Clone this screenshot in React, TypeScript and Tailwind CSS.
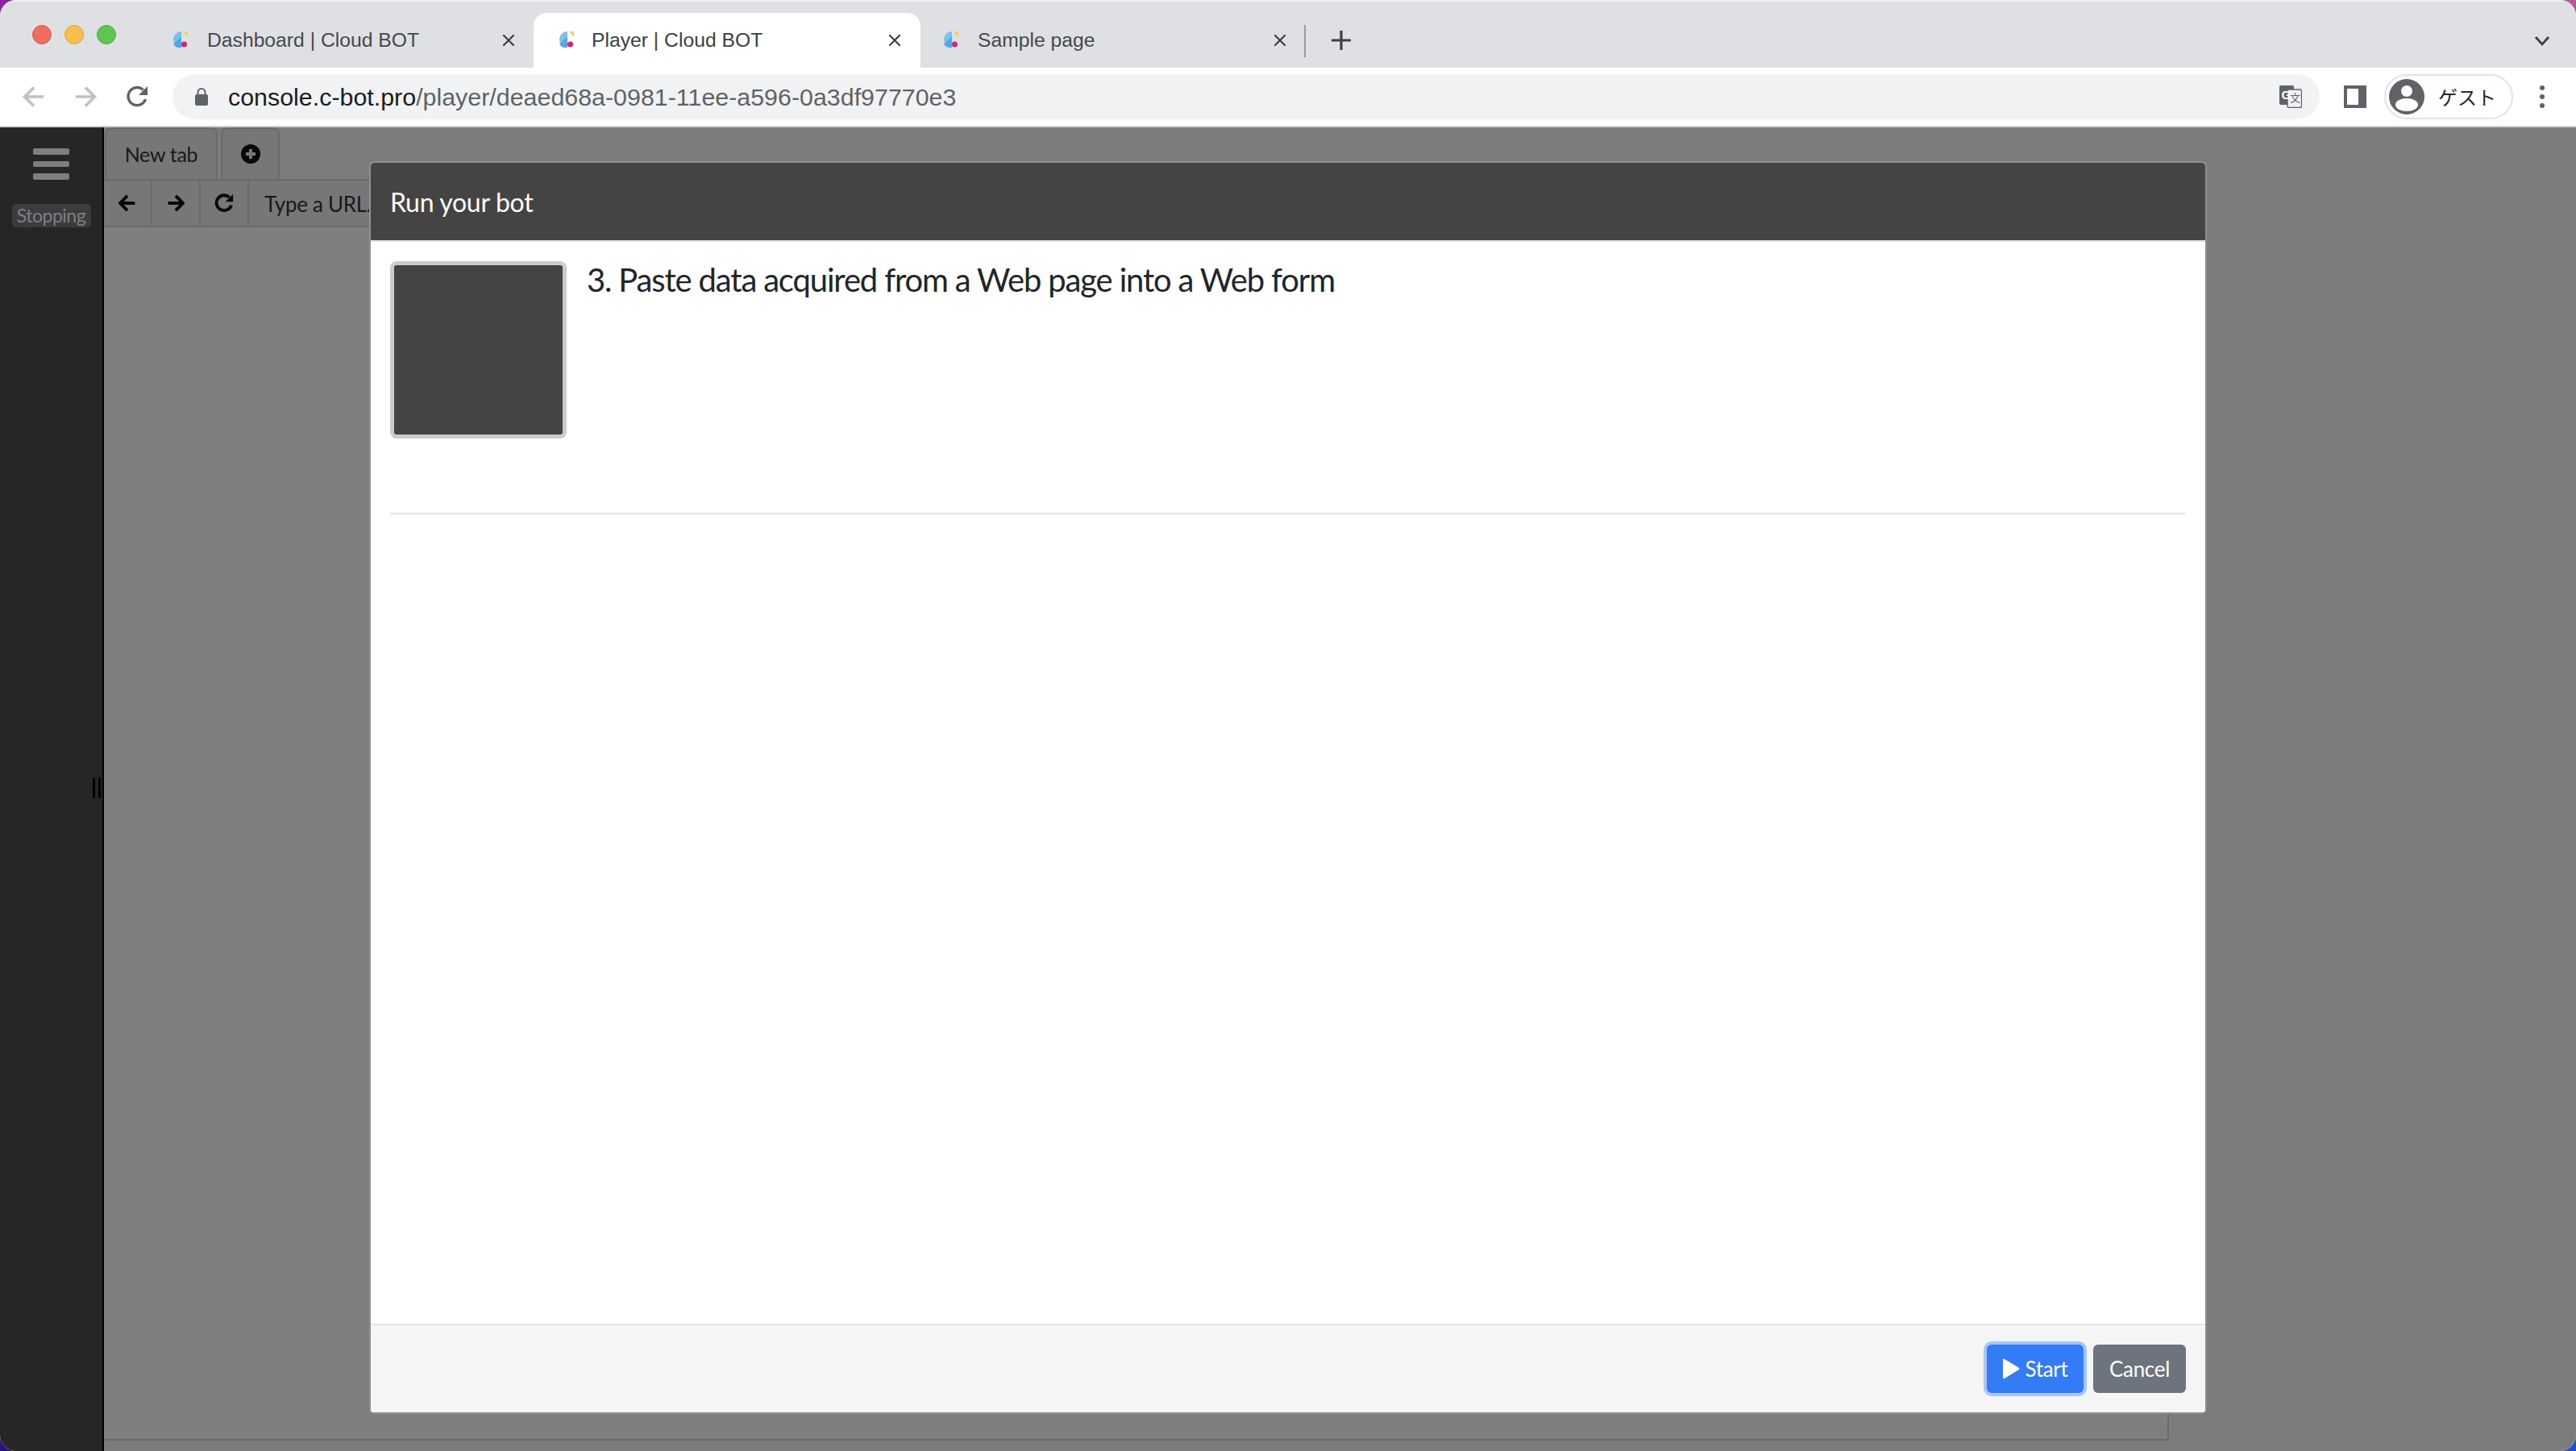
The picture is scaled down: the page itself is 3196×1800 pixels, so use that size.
import React from "react";

function Favicon() {
  return (
    <svg width="24" height="24" viewBox="0 0 24 24" className="shrink-0">
      <path d="M15 2 A10 10 0 1 0 15 22 Z" fill="#7cc0ec" />
      <path d="M15 8 L15 22 A10 10 0 0 1 5 18 Z" fill="#4fa9e4" />
      <path d="M16 2 H23 V9.5 Q20 4 16 2 Z" fill="#f4cf63" />
      <circle cx="18.5" cy="18" r="3.6" fill="#d8256f" />
    </svg>
  );
}

function CloseX() {
  return (
    <svg width="16" height="16" viewBox="0 0 16 16" className="shrink-0">
      <path d="M2 2 L14 14 M14 2 L2 14" stroke="#3c3f44" strokeWidth="2.2" strokeLinecap="round" />
    </svg>
  );
}

function BrowserTab({ title, active, width, pl, textGap }: { title: string; active?: boolean; width: string; pl: string; textGap: string }) {
  return (
    <div className={`flex items-center h-[68px] shrink-0 ${width} ${pl} ${active ? "bg-white rounded-t-[16px] text-[#3c3f44]" : "text-[#45484d]"}`}>
      <div className="-mt-[2px]"><Favicon /></div>
      <span className={`${textGap} flex-1 whitespace-nowrap text-[24.7px] font-['Liberation_Sans',sans-serif] leading-none`}>{title}</span>
      <CloseX />
    </div>
  );
}

function ArrowIcon({ dir, color, size = 28, width = 3.6 }: { dir: "l" | "r"; color: string; size?: number; width?: number }) {
  const d = dir === "l" ? "M26 14 H3 M14 2.5 L2.5 14 L14 25.5" : "M2 14 H25 M14 2.5 L25.5 14 L14 25.5";
  return (
    <svg width={size} height={size} viewBox="0 0 28 28">
      <path d={d} fill="none" stroke={color} strokeWidth={width} />
    </svg>
  );
}

function ReloadIcon({ size = 28, color = "#5f6368", sw = 3.4 }: { size?: number; color?: string; sw?: number }) {
  return (
    <svg width={size} height={size} viewBox="0 0 28 28">
      <path d="M24.5 17 A11 11 0 1 1 21.5 5.5" fill="none" stroke={color} strokeWidth={sw} />
      <path d="M27 1 V12 H16 Z" fill={color} />
    </svg>
  );
}

function AppBtn({ children, w }: { children: React.ReactNode; w: string }) {
  return <div className={`${w} h-full flex items-center justify-center border-r-2 border-[#d2d2d2] shrink-0`}>{children}</div>;
}

export default function App() {
  return (
    <div className="relative w-[3196px] h-[1800px] overflow-hidden bg-[conic-gradient(#b85a92_0_25%,#2050c8_25%_50%,#2b1280_50%_75%,#8e239f_75%)]">
      <div className="w-full h-full rounded-[20px] overflow-hidden flex flex-col relative bg-white">
        {/* Tab strip */}
        <div className="h-[84px] bg-[#dfe0e4] flex items-end shrink-0 border-t-2 border-[#eceded] relative">
          <div className="w-[210px] h-[68px] flex items-start gap-[16px] pl-[40px] pt-[15px] shrink-0">
            <div className="w-[24px] h-[24px] rounded-full bg-[#f06c60] border border-[#d9574c]" />
            <div className="w-[24px] h-[24px] rounded-full bg-[#f7bf4f] border border-[#dba53b]" />
            <div className="w-[24px] h-[24px] rounded-full bg-[#5fc454] border border-[#4ca844]" />
          </div>
          <BrowserTab title="Dashboard | Cloud BOT" width="w-[452px]" pl="pr-[23px]" textGap="ml-[23px]" />
          <BrowserTab title="Player | Cloud BOT" active width="w-[480px]" pl="pl-[27px] pr-[24px]" textGap="ml-[21px]" />
          <BrowserTab title="Sample page" width="w-[476px]" pl="pl-[24px] pr-[22px]" textGap="ml-[23px]" />
          <div className="w-[2px] h-[40px] bg-[#9a9ba0] mb-[13px] shrink-0" />
          <div className="ml-[31px] mb-[21px] shrink-0">
            <svg width="26" height="26" viewBox="0 0 26 26"><path d="M13 1 V25 M1 13 H25" stroke="#3c3f44" strokeWidth="3.2" /></svg>
          </div>
          <div className="absolute right-[32px] top-[42px]">
            <svg width="20" height="14" viewBox="0 0 20 14"><path d="M2 2 L10 11 L18 2" fill="none" stroke="#3c3f44" strokeWidth="2.8" /></svg>
          </div>
        </div>
        {/* Toolbar */}
        <div className="h-[74px] shrink-0 bg-white border-b-2 border-[#cfd0d0] flex items-start pt-[8px] pr-[34px]">
          <div className="w-[214px] h-[56px] flex items-center shrink-0 pl-[28px]">
            <ArrowIcon dir="l" color="#c0c0c2" />
            <div className="w-[36px]" />
            <ArrowIcon dir="r" color="#c0c0c2" />
            <div className="w-[36px]" />
            <ReloadIcon />
          </div>
          <div className="w-[2664px] h-[56px] rounded-full bg-[#f1f2f4] flex items-center pl-[28px] pr-[22px] shrink-0">
            <svg width="16" height="22" viewBox="0 0 16 22" className="shrink-0">
              <rect x="0" y="8" width="16" height="14" rx="2" fill="#5f6368" />
              <path d="M3.5 9 V5.5 a4.5 4.5 0 0 1 9 0 V9" fill="none" stroke="#5f6368" strokeWidth="2" />
            </svg>
            <span className="ml-[25px] flex-1 whitespace-nowrap text-[30.4px] leading-none font-['Liberation_Sans',sans-serif] text-[#5f6368]">
              <span className="text-[#1c1c1e]">console.c-bot.pro</span>/player/deaed68a-0981-11ee-a596-0a3df97770e3
            </span>
            <svg width="28" height="28" viewBox="0 0 28 28" className="shrink-0">
              <rect x="0" y="0" width="18" height="24" rx="2" fill="#5f6368" />
              <rect x="10" y="5" width="17.5" height="22.5" rx="2" fill="#f1f2f4" stroke="#5f6368" strokeWidth="1.4" />
              <text x="2.5" y="17" fontSize="15" fontWeight="700" fill="#fff" fontFamily="Liberation Sans, sans-serif">G</text>
              <text x="13" y="20" fontSize="13" fill="#5f6368" fontFamily="Noto Sans CJK SC, sans-serif">文</text>
            </svg>
          </div>
          <svg width="28" height="28" viewBox="0 0 28 28" className="ml-[30px] mt-[14px] shrink-0">
            <path fillRule="evenodd" d="M0 0 H28 V28 H0 Z M4 4 V24 H18 V4 Z" fill="#5f6368" />
          </svg>
          <div className="ml-[22px] w-[160px] h-[56px] rounded-full border-2 border-[#e3e3e5] flex items-center pl-[4px] shrink-0">
            <svg width="44" height="44" viewBox="0 0 44 44" className="shrink-0">
              <circle cx="22" cy="22" r="22" fill="#5f6368" />
              <circle cx="22" cy="15" r="7" fill="#fff" />
              <ellipse cx="22" cy="32" rx="14" ry="8" fill="#fff" />
            </svg>
            <span className="ml-[17px] whitespace-nowrap text-[24px] leading-none text-[#26282b] font-['Noto_Sans_CJK_JP',sans-serif]">ゲスト</span>
          </div>
          <svg width="8" height="32" viewBox="0 0 8 32" className="ml-[32px] mt-[12px] shrink-0">
            <circle cx="4" cy="5" r="3" fill="#5f6368" />
            <circle cx="4" cy="16" r="3" fill="#5f6368" />
            <circle cx="4" cy="27" r="3" fill="#5f6368" />
          </svg>
        </div>
        {/* Page */}
        <div className="flex-1 min-h-0 flex bg-[#f8f8f8]">
          <aside className="w-[129px] shrink-0 bg-[#4c4c4c] border-r-2 border-black flex flex-col items-center relative">
            <div className="mt-[26px] w-[45px] flex flex-col gap-[8px]">
              <div className="h-[7.5px] rounded-[2px] bg-white" />
              <div className="h-[7.5px] rounded-[2px] bg-white" />
              <div className="h-[7.5px] rounded-[2px] bg-white" />
            </div>
            <div className="mt-[30px] w-[98px] h-[29px] rounded-[5px] bg-[#74787d] text-[#fdfdfd] text-[23px] leading-[28px] text-center font-['Lato',sans-serif] tracking-[-0.5px]">Stopping</div>
            <div className="absolute left-[115px] top-[807px] w-[10px] h-[25px] border-x-[3px] border-black" />
          </aside>
          <main className="flex-1 min-w-0 flex flex-col w-[2562px]">
            <div className="h-[66px] w-[2562px] shrink-0 flex items-stretch border-b-2 border-[#d4d4d4] pl-[1px] font-['Lato',sans-serif]">
              <div className="w-[140px] pt-[2px] border-2 border-b-0 border-[#d4d4d4] rounded-t-[8px] bg-[#eeeeee] flex items-center justify-center text-[25px] text-[#333] tracking-[-0.3px]">New tab</div>
              <div className="ml-[4px] w-[73px] border-2 border-b-0 border-[#d4d4d4] rounded-t-[8px] bg-[#eeeeee] flex items-center justify-center">
                <svg width="24" height="24" viewBox="0 0 24 24">
                  <circle cx="12" cy="12" r="12" fill="#111" />
                  <path d="M12 6 V18 M6 12 H18" stroke="#eee" strokeWidth="4" />
                </svg>
              </div>
            </div>
            <div className="h-[58px] w-[2562px] shrink-0 flex items-stretch bg-[#eeeeee] border-b-2 border-[#d4d4d4] font-['Lato',sans-serif]">
              <AppBtn w="w-[60px]"><ArrowIcon dir="l" color="#111" size={22} width={5} /></AppBtn>
              <AppBtn w="w-[60px]"><ArrowIcon dir="r" color="#111" size={22} width={5} /></AppBtn>
              <AppBtn w="w-[60px]"><ReloadIcon size={24} color="#111" sw={4.5} /></AppBtn>
              <div className="pl-[19px] pt-[3px] flex items-center text-[26px] text-[#333] tracking-[-0.3px]">Type a URL...</div>
            </div>
            <div className="h-[1505px] w-[2562px] bg-white border-r-2 border-b-2 border-[#d4d4d4] shrink-0" />
          </main>
        </div>
        {/* Overlay */}
        <div className="absolute left-0 right-0 top-[158px] bottom-0 bg-black/50" />
        {/* Modal */}
        <div className="absolute left-[458px] top-[200px] w-[2280px] h-[1554px] rounded-[6px] border-2 border-[#8f8f8f] bg-white flex flex-col overflow-hidden font-['Lato',sans-serif]">
          <div className="h-[94px] pt-[2px] shrink-0 bg-[#444444] flex items-center pl-[24px] text-white text-[32px] border-b-2 border-[#e3e3e8] box-content tracking-[-0.3px]">Run your bot</div>
          <div className="flex-1 min-h-0 px-[24px] pt-[24px]">
            <div className="flex items-start h-[314px] border-b-2 border-[#e2e2e8]">
              <div className="w-[219px] h-[220px] shrink-0 rounded-[8px] bg-[#444444] border-[5px] border-[#cccccc]" />
              <div className="ml-[25px] text-[40px] leading-[46px] text-[#212529] whitespace-nowrap tracking-[-1.17px]">3. Paste data acquired from a Web page into a Web form</div>
            </div>
          </div>
          <div className="h-[110px] shrink-0 bg-[#f5f5f6] border-t-2 border-[#e2e2e8] flex items-start justify-end pr-[24px] pt-[24px] gap-[12px]">
            <div className="h-[60px] w-[120px] rounded-[6px] bg-[#337cf6] ring-4 ring-[#a5c6f8] flex items-center justify-center text-white text-[26px] tracking-[-0.3px]">
              <svg width="22" height="26" viewBox="0 0 22 26" className="mr-[6px]"><path d="M1 2 Q1 0 3 1 L21 12 Q22 13 21 14 L3 25 Q1 26 1 24 Z" fill="#fff" /></svg>
              Start
            </div>
            <div className="h-[60px] w-[115px] rounded-[6px] bg-[#6c757d] flex items-center justify-center text-white text-[26px] tracking-[-0.3px]">Cancel</div>
          </div>
        </div>
      </div>
    </div>
  );
}
